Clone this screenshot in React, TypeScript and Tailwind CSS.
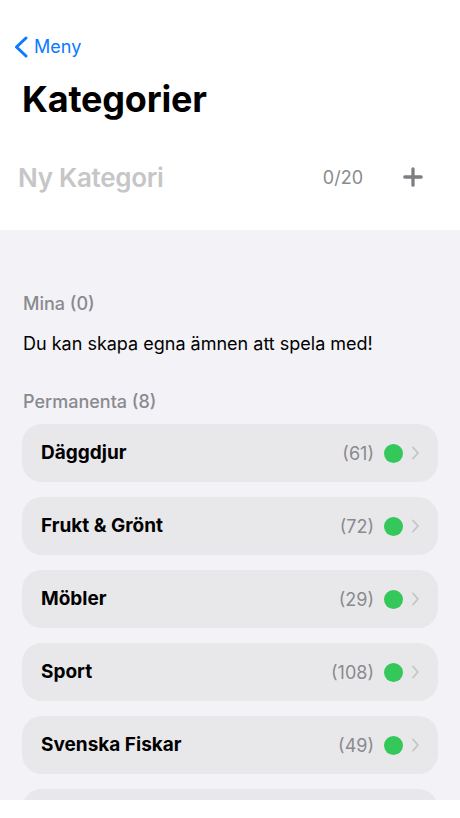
import { Plus } from 'lucide-react'

const CATEGORIES = [
  { name: 'Däggdjur', count: 61 },
  { name: 'Frukt & Grönt', count: 72 },
  { name: 'Möbler', count: 29 },
  { name: 'Sport', count: 108 },
  { name: 'Svenska Fiskar', count: 49 },
]

function BackChevron() {
  return (
    <svg width="16" height="22" viewBox="0 0 16 22" fill="none" className="ml-[13px]">
      <path d="M13 2 L3.5 11 L13 20" stroke="currentColor" strokeWidth="3" strokeLinecap="round" strokeLinejoin="round" />
    </svg>
  )
}

function RowChevron() {
  return (
    <svg width="9" height="14" viewBox="0 0 9 14" fill="none" className="ml-[8px]">
      <path d="M2 1.5 L7 7 L2 12.5" stroke="#c4c4c7" strokeWidth="1.8" strokeLinecap="round" strokeLinejoin="round" />
    </svg>
  )
}

export default function App() {
  return (
    <div className="w-[460px] h-[818px] bg-white overflow-hidden font-['Inter','Noto_Sans',sans-serif]">
      {/* Header */}
      <header className="h-[230px] flex flex-col">
        <div className="mt-[36px] h-[22px] flex items-center text-[#0a7aff]">
          <BackChevron />
          <span className="ml-[5px] text-[18px] leading-[20px]">Meny</span>
        </div>
        <h1 className="mt-[19px] ml-[22px] text-[36px] leading-[44px] font-bold text-black tracking-[-0.2px]">
          Kategorier
        </h1>
        <div className="mt-[34px] h-[44px] flex items-center">
          <span className="ml-[18px] flex-1 text-[26px] font-semibold text-[#c6c6c8] tracking-[-0.3px]">Ny Kategori</span>
          <span className="text-[18px] text-[#8a8a8e]">0/20</span>
          <Plus size={28} strokeWidth={2.8} className="ml-[36px] mr-[33px] text-[#7f7f83]" />
        </div>
      </header>

      {/* List */}
      <main className="h-[570px] bg-[#f2f2f7] overflow-hidden flex flex-col px-[22px]">
        <p className="mt-[63px] text-[18px] leading-[22px] font-medium text-[#8a8a8e] px-px">Mina (0)</p>
        <p className="mt-[18px] text-[18px] leading-[22px] text-black px-px">Du kan skapa egna ämnen att spela med!</p>
        <p className="mt-[36px] text-[18px] leading-[22px] font-medium text-[#8a8a8e] px-px">Permanenta (8)</p>

        <ul className="mt-[11px] flex flex-col gap-[15px]">
          {CATEGORIES.map(({ name, count }) => (
            <li
              key={name}
              className="h-[58px] shrink-0 rounded-[20px] bg-[#e8e8eb] flex items-center pl-[19px] pr-[18px]"
            >
              <span className="flex-1 text-[19px] font-bold text-black">{name}</span>
              <span className="text-[18px] text-[#8a8a8e]">({count})</span>
              <span className="ml-[10px] w-[19px] h-[19px] rounded-full bg-[#34c759]" />
              <RowChevron />
            </li>
          ))}
          {/* next row, cut off by the screen edge */}
          <li className="h-[58px] shrink-0 rounded-[20px] bg-[#e8e8eb]" />
        </ul>
      </main>
    </div>
  )
}
